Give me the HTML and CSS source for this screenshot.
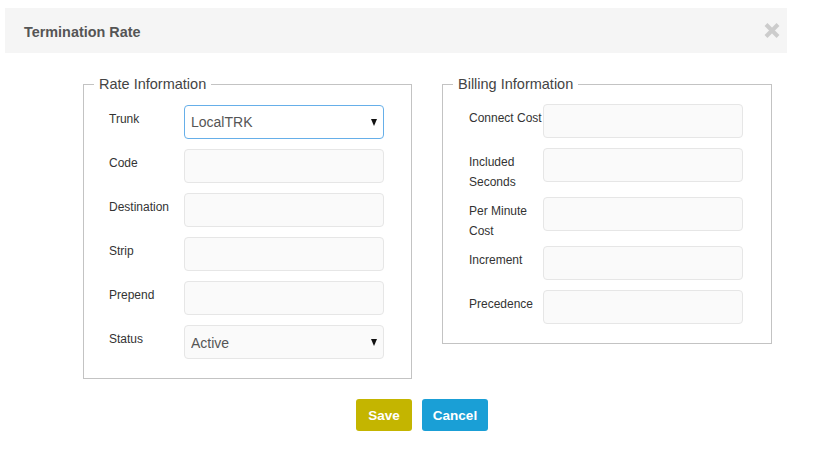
FILE: index.html
```html
<!DOCTYPE html>
<html lang="en">
<head>
<meta charset="utf-8">
<title>Termination Rate</title>
<link rel="stylesheet" href="styles.css">
</head>
<body>
<div class="modal">
  <div class="modal-header">
    <h4 class="modal-title">Termination Rate</h4>
    <button class="close" type="button" aria-label="Close">
      <svg width="16" height="15" viewBox="0 0 16 15"><path d="M2 1.5 L14 13.5 M14 1.5 L2 13.5" stroke="#cccccc" stroke-width="4" stroke-linecap="butt"/></svg>
    </button>
  </div>
  <div class="modal-body">
    <fieldset class="group group-left">
      <legend>Rate Information</legend>
      <div class="row">
        <label>Trunk</label>
        <div class="select-wrap">
          <select class="control focus"><option>LocalTRK</option></select>
          <span class="caret"></span>
        </div>
      </div>
      <div class="row"><label>Code</label><input class="control" type="text"></div>
      <div class="row"><label>Destination</label><input class="control" type="text"></div>
      <div class="row"><label>Strip</label><input class="control" type="text"></div>
      <div class="row"><label>Prepend</label><input class="control" type="text"></div>
      <div class="row">
        <label>Status</label>
        <div class="select-wrap">
          <select class="control status"><option>Active</option></select>
          <span class="caret"></span>
        </div>
      </div>
    </fieldset>
    <fieldset class="group group-right">
      <legend>Billing Information</legend>
      <div class="row"><label>Connect Cost</label><input class="control" type="text"></div>
      <div class="row"><label>Included Seconds</label><input class="control" type="text"></div>
      <div class="row"><label>Per Minute Cost</label><input class="control" type="text"></div>
      <div class="row"><label>Increment</label><input class="control" type="text"></div>
      <div class="row"><label>Precedence</label><input class="control" type="text"></div>
    </fieldset>
  </div>
  <div class="modal-footer">
    <button class="btn btn-save" type="button">Save</button>
    <button class="btn btn-cancel" type="button">Cancel</button>
  </div>
</div>
</body>
</html>
```
FILE: styles.css
```css
* { box-sizing: border-box; }
html, body { margin: 0; padding: 0; background: #fff; }
body {
  font-family: "Liberation Sans", Arial, sans-serif;
  color: #333;
  padding: 8px 0 0 5px;
}
.modal { width: 782px; }
.modal-header {
  height: 45px;
  background: #f5f5f5;
  display: flex;
  align-items: center;
  justify-content: space-between;
  padding: 0 7px 0 19px;
}
.modal-title {
  margin: 3px 0 0 0;
  font-size: 14.4px;
  font-weight: bold;
  color: #555;
}
.close {
  border: 0;
  background: none;
  padding: 0;
  margin: 0 0 1px 0;
  width: 16px;
  height: 15px;
  display: block;
}
.close svg { display: block; }
.modal-body {
  display: flex;
  align-items: flex-start;
  gap: 30px;
  padding: 21px 0 0 78px;
}
.group {
  margin: 0;
  border: 1px solid #c3c3c3;
  padding: 10px 0 9px 25px;
  min-width: 0;
}
.group-left { width: 329px; padding-top: 11px; padding-bottom: 9px; }
.group-right { width: 330px; padding-left: 26px; }
.group legend {
  margin-left: -15px;
  padding: 0 5px;
  font-size: 14.5px;
  line-height: 20px;
  color: #444;
}
.group-right legend { margin-left: -16px; }
.row {
  display: flex;
  align-items: flex-start;
  margin-bottom: 5px;
}
.row label {
  width: 75px;
  flex: none;
  font-size: 12px;
  line-height: 20px;
  padding: 4px 0 0 0;
  color: #333;
}
.group-right .row label { width: 74px; }
.control {
  display: block;
  width: 200px;
  height: 34px;
  margin: 0 0 5px 0;
  border: 1px solid #e6e6e6;
  border-radius: 4px;
  background: #fafafa;
  font-family: "Liberation Sans", Arial, sans-serif;
  font-size: 14px;
  color: #555;
  padding: 6px 6px;
  outline: none;
}
select.control {
  -webkit-appearance: none;
  appearance: none;
  padding: 0 6px;
}
.control.focus {
  background: #fff;
  border-color: #66afe9;
}
.control.status { padding-top: 2px; }
.select-wrap { position: relative; }
.caret {
  position: absolute;
  right: 7px;
  top: 14px;
  width: 0;
  height: 0;
  border-left: 3.5px solid transparent;
  border-right: 3.5px solid transparent;
  border-top: 7px solid #111;
}
.modal-footer {
  display: flex;
  gap: 10px;
  padding: 20px 0 0 351px;
}
.btn {
  height: 32px;
  border: 0;
  border-radius: 3px;
  padding: 0;
  font-family: "Liberation Sans", Arial, sans-serif;
  font-size: 13.5px;
  font-weight: bold;
  color: #fff;
}
.btn-save { background: #c4b500; width: 56px; }
.btn-cancel { background: #1a9fd6; width: 66px; }
```
